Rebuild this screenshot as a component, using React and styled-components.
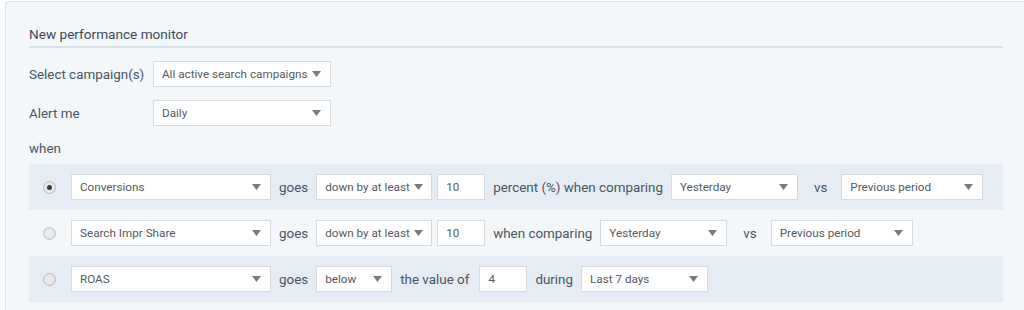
import React from 'react';
import styled, { createGlobalStyle } from 'styled-components';

const GlobalStyle = createGlobalStyle`
  html, body {
    margin: 0;
    background: #ffffff;
    overflow: hidden;
    font-family: Roboto, "Liberation Sans", sans-serif;
  }
`;

export default function App() {
  return (
    <>
      <GlobalStyle />
      <Panel>
        <Title>New performance monitor</Title>
        <FieldRow>
          <FieldLabel>Select campaign(s)</FieldLabel>
          <Select value="All active search campaigns" width={178} />
        </FieldRow>
        <FieldRow>
          <FieldLabel>Alert me</FieldLabel>
          <Select value="Daily" width={178} />
        </FieldRow>
        <When>when</When>
        <Rule shaded>
          <Radio checked />
          <Select value="Conversions" width={200} />
          <Label>goes</Label>
          <Select value="down by at least" width={116} />
          <Input>10</Input>
          <Label>percent (%) when comparing</Label>
          <Select value="Yesterday" width={127} />
          <Vs>vs</Vs>
          <Select value="Previous period" width={142} />
        </Rule>
        <Rule>
          <Radio />
          <Select value="Search Impr Share" width={200} />
          <Label>goes</Label>
          <Select value="down by at least" width={116} />
          <Input>10</Input>
          <Label>when comparing</Label>
          <Select value="Yesterday" width={127} />
          <Vs>vs</Vs>
          <Select value="Previous period" width={142} />
        </Rule>
        <Rule shaded>
          <Radio />
          <Select value="ROAS" width={200} />
          <Label>goes</Label>
          <Select value="below" width={76} />
          <Label>the value of</Label>
          <Input spaced>4</Input>
          <Label>during</Label>
          <Select value="Last 7 days" width={127} />
        </Rule>
      </Panel>
    </>
  );
}

function Select({ value, width }) {
  return (
    <SelectBox $width={width}>
      <span>{value}</span>
      <Caret viewBox="0 0 9 6">
        <path d="M0 0 L9 0 L4.5 6 Z" />
      </Caret>
    </SelectBox>
  );
}

const Panel = styled.div`
  margin: 1px 0 0 5px;
  width: 1040px;
  height: 309px;
  box-sizing: border-box;
  padding: 22px 0 0 23px;
  background: #f3f7fa;
  border: 1px solid #dbe4ec;
  border-bottom: none;
  border-radius: 4px 4px 0 0;
`;

const Title = styled.div`
  width: 974px;
  font-size: 13.6px;
  line-height: 20px;
  color: #3d4a56;
  padding-bottom: 2px;
  border-bottom: 2px solid #d6e1ea;
`;

const FieldRow = styled.div`
  display: flex;
  align-items: center;
  margin-top: 13px;
`;

const FieldLabel = styled.div`
  width: 124px;
  font-size: 13.4px;
  color: #4a5561;
`;

const When = styled.div`
  margin-top: 13px;
  font-size: 13.4px;
  line-height: 20px;
  color: #4a5561;
`;

const Rule = styled.div`
  width: 974px;
  height: 46px;
  box-sizing: border-box;
  display: flex;
  align-items: center;
  gap: 8px;
  padding-left: 14px;
  background: ${p => (p.shaded ? '#e5ecf3' : 'transparent')};
  ${When} + & {
    margin-top: 5px;
  }
`;

const Radio = styled.span`
  width: 13px;
  height: 13px;
  box-sizing: border-box;
  margin-right: 7px;
  border-radius: 50%;
  border: 1px solid #bdbdbd;
  background: radial-gradient(circle, #f0f0f0 0%, #dedede 100%);
  display: flex;
  align-items: center;
  justify-content: center;
  flex-shrink: 0;
  &::after {
    content: '';
    display: ${p => (p.checked ? 'block' : 'none')};
    width: 5px;
    height: 5px;
    border-radius: 50%;
    background: #3a3a3a;
  }
`;

const SelectBox = styled.div`
  width: ${p => p.$width}px;
  height: 26px;
  box-sizing: border-box;
  display: flex;
  align-items: center;
  justify-content: space-between;
  gap: 4px;
  padding: 0 9px 0 8px;
  background: #ffffff;
  border: 1px solid #d9dcdf;
  font-size: 11.7px;
  color: #555b61;
  white-space: nowrap;
  flex-shrink: 0;
`;

const Caret = styled.svg`
  width: 9px;
  height: 6px;
  fill: #7a7a7a;
  flex-shrink: 0;
`;

const Input = styled.div`
  width: 48px;
  height: 26px;
  box-sizing: border-box;
  display: flex;
  align-items: center;
  padding-left: 8px;
  margin-left: ${p => (p.spaced ? '2px' : '-3px')};
  background: #ffffff;
  border: 1px solid #d9dcdf;
  font-size: 11.7px;
  color: #555b61;
  flex-shrink: 0;
`;

const Label = styled.span`
  font-size: 13.4px;
  color: #4a5561;
  white-space: nowrap;
`;

const Vs = styled(Label)`
  margin: 0 6px 0 8px;
`;
